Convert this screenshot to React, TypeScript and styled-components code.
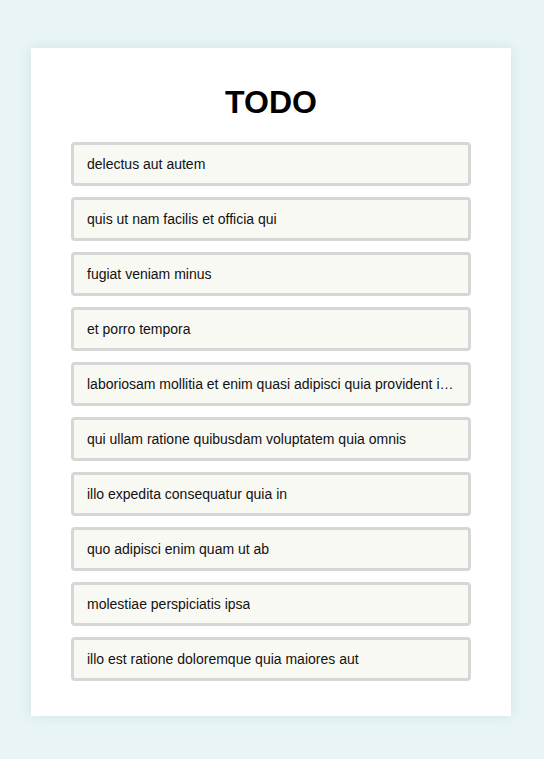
import React from "react";
import styled, { createGlobalStyle } from "styled-components";

const Global = createGlobalStyle`
  html, body { margin: 0; padding: 0; background: #e8f4f5; }
  body { font-family: "Liberation Sans", Arial, Helvetica, sans-serif; }
`;

const Page = styled.div`
  padding: 48px 0 43px;
`;

const Card = styled.main`
  width: 480px;
  margin: 0 auto 0 31px;
  background: #ffffff;
  box-shadow: 0 0 10px rgba(120, 160, 165, 0.18);
  padding: 36px 40px 35px;
  box-sizing: border-box;
`;

const Title = styled.h1`
  margin: 0 0 22px;
  font-size: 32px;
  line-height: 36px;
  font-weight: 700;
  text-align: center;
  color: #000;
`;

const List = styled.ul`
  list-style: none;
  margin: 0;
  padding: 0;
  display: flex;
  flex-direction: column;
  gap: 11px;
`;

const Item = styled.li`
  height: 44px;
  box-sizing: border-box;
  border: 3px solid #d6d6d6;
  border-radius: 4px;
  background: #f9f9f4;
  padding: 0 13px;
  display: flex;
  align-items: center;
  font-size: 14px;
  color: #111;
  white-space: nowrap;
  overflow: hidden;
`;

const Text = styled.span`
  overflow: hidden;
  text-overflow: ellipsis;
  white-space: nowrap;
  min-width: 0;
`;

const todos = [
  "delectus aut autem",
  "quis ut nam facilis et officia qui",
  "fugiat veniam minus",
  "et porro tempora",
  "laboriosam mollitia et enim quasi adipisci quia provident illum",
  "qui ullam ratione quibusdam voluptatem quia omnis",
  "illo expedita consequatur quia in",
  "quo adipisci enim quam ut ab",
  "molestiae perspiciatis ipsa",
  "illo est ratione doloremque quia maiores aut",
];

export default function App() {
  return (
    <Page>
      <Global />
      <Card>
        <Title>TODO</Title>
        <List>
          {todos.map((t) => (
            <Item key={t}>
              <Text>{t}</Text>
            </Item>
          ))}
        </List>
      </Card>
    </Page>
  );
}
